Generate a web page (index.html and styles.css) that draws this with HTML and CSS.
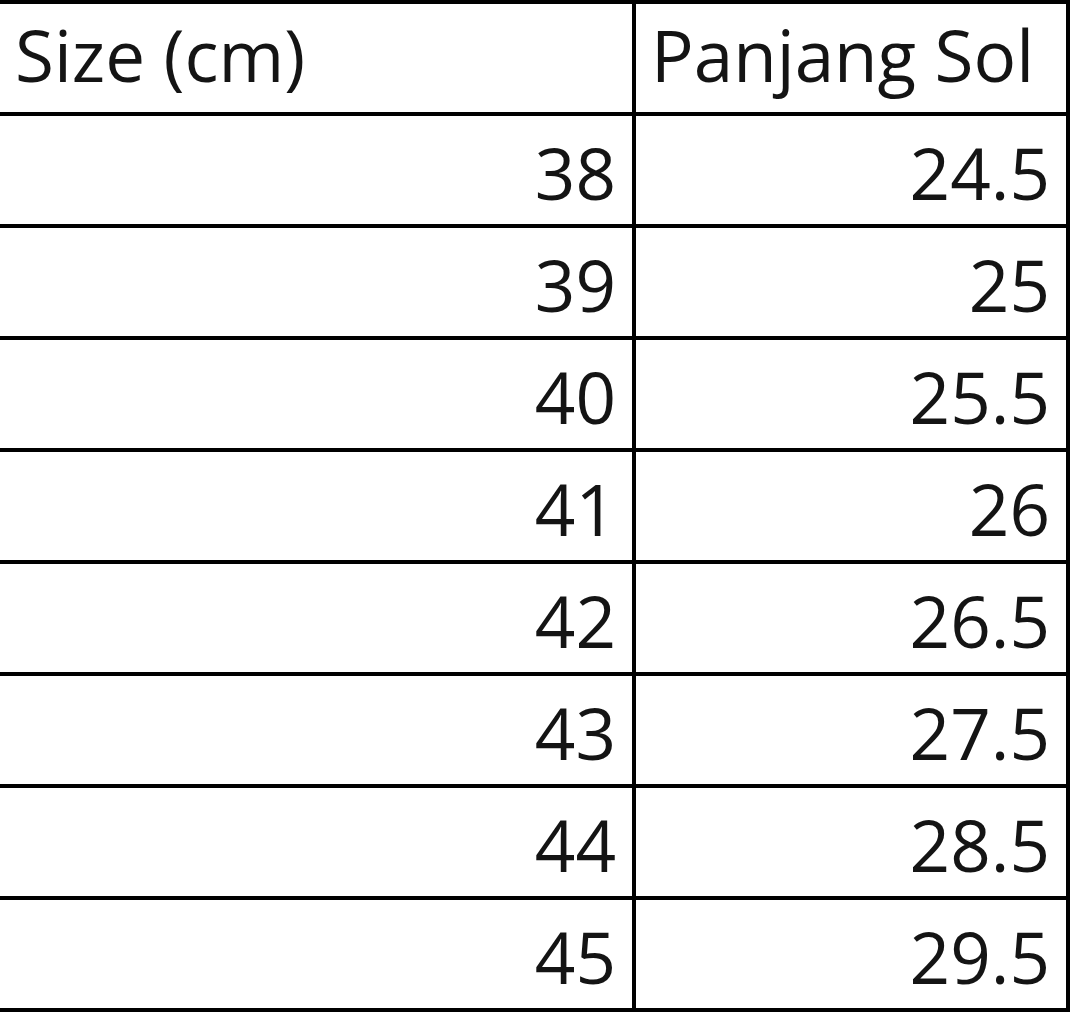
FILE: index.html
```html
<!DOCTYPE html>
<html>
<head>
<meta charset="utf-8">
<link rel="stylesheet" href="styles.css">
</head>
<body>
<div class="table">
  <div class="row head">
    <div class="cell left">Size (cm)</div>
    <div class="cell left">Panjang Sol</div>
  </div>
  <div class="row"><div class="cell num">38</div><div class="cell num">24.5</div></div>
  <div class="row"><div class="cell num">39</div><div class="cell num">25</div></div>
  <div class="row"><div class="cell num">40</div><div class="cell num">25.5</div></div>
  <div class="row"><div class="cell num">41</div><div class="cell num">26</div></div>
  <div class="row"><div class="cell num">42</div><div class="cell num">26.5</div></div>
  <div class="row"><div class="cell num">43</div><div class="cell num">27.5</div></div>
  <div class="row"><div class="cell num">44</div><div class="cell num">28.5</div></div>
  <div class="row"><div class="cell num">45</div><div class="cell num">29.5</div></div>
</div>
</body>
</html>
```
FILE: styles.css
```css
html, body {
  margin: 0;
  padding: 0;
  background: #fff;
}
.table {
  width: 1070px;
  border-top: 4px solid #000;
  border-right: 4px solid #000;
  box-sizing: border-box;
  font-family: "Open Sans", "Noto Sans", sans-serif;
  font-size: 71px;
  color: #141414;
}
.row {
  display: grid;
  grid-template-columns: 636px 1fr;
  height: 112px;
  box-sizing: border-box;
  border-bottom: 4px solid #000;
}
.cell {
  height: 108px;
  box-sizing: border-box;
  padding-top: 7px;
  line-height: 100px;
  white-space: nowrap;
}
.cell:first-child {
  border-right: 4px solid #000;
}
.head .cell {
  padding-top: 1px;
}
.left {
  text-align: left;
  padding-left: 15px;
}
.num {
  text-align: right;
  padding-right: 16px;
}
```
